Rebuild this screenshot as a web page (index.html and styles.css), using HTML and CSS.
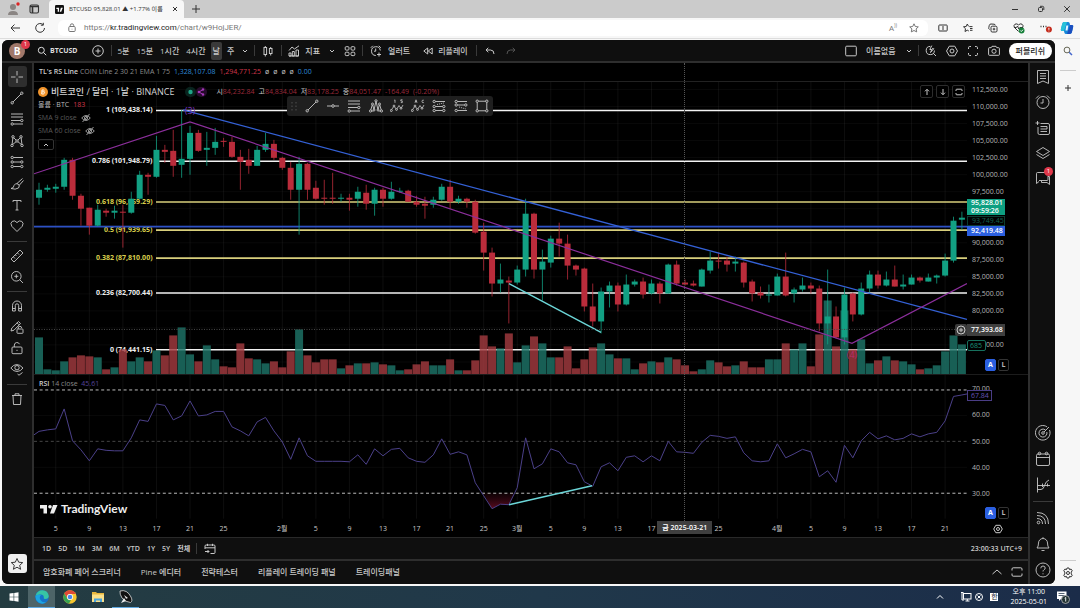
FILE: index.html
```html
<!DOCTYPE html>
<html lang="ko">
<head>
<meta charset="utf-8">
<title>BTCUSD 95,828.01 ▲ +1.77% 이름없음</title>
<link rel="stylesheet" href="styles.css">
</head>
<body>
<header class="tabs">
  <svg class="profile" viewBox="0 0 14 14"><circle cx="7" cy="5" r="3" fill="#8a8583"/><path d="M2 13q0-4 5-4t5 4z" fill="#8a8583"/><circle cx="12" cy="2" r="1.7" fill="#d22"/></svg>
  <svg class="workspaces" viewBox="0 0 12 12"><rect x="2" y="2" width="8.5" height="8" rx="1.5" fill="none" stroke="#333" stroke-width="1.1"/><path d="M2 3.500h8.500M4.500 4v6" stroke="#333" stroke-width="1.6"/></svg>
  <div class="tab">
    <svg class="favicon" viewBox="0 0 10 10"><rect width="10" height="10" rx="1.5" fill="#111"/><path d="M1.500 3h3v4.500h-1.500v-3h-1.500zM6.500 3h2.200l-1.800 4.500h-1.600z" fill="#fff"/></svg>
    <span class="tab-title">BTCUSD 95,828.01 ▲ +1.77% 이름</span>
    <button class="plain" aria-label="탭 닫기"><svg class="s8" viewBox="0 0 8 8"><path d="M2 2l4 4M6 2l-4 4"/></svg></button>
  </div>
  <button class="plain newtab" aria-label="새 탭"><svg class="s10" viewBox="0 0 10 10"><path d="M5 1v8M1 5h8"/></svg></button>
  <div class="window-buttons">
    <button class="plain" aria-label="최소화"><svg class="s10" viewBox="0 0 10 10"><path d="M2 5.500h6"/></svg></button>
    <button class="plain" aria-label="복원"><svg class="s10" viewBox="0 0 10 10"><rect x="2.500" y="3.500" width="4" height="4" rx="1"/><path d="M4 2.300h2.500q1.300 0 1.300 1.300V6"/></svg></button>
    <button class="plain" aria-label="닫기"><svg class="s10" viewBox="0 0 10 10"><path d="M2.200 2.200l5.600 5.600M7.800 2.200l-5.600 5.600"/></svg></button>
  </div>
</header>
<nav class="address">
  <button class="plain" aria-label="뒤로"><svg class="s12" viewBox="0 0 12 12"><path d="M11 6H2M5.500 2.500L2 6l3.500 3.500"/></svg></button>
  <button class="plain" aria-label="새로 고침"><svg class="s12" viewBox="0 0 12 12"><path d="M10.500 6a4.400 4.400 0 1 1-1.600-3.500M9.300 .8v2.400H6.900"/></svg></button>
  <div class="urlbox">
    <svg class="s10 dim" viewBox="0 0 10 10"><rect x="1.800" y="3.500" width="6.400" height="5" rx="1"/><path d="M3.300 3.500V2.500a1.700 1.700 0 0 1 3.400 0v1M5 5.800v.6"/></svg>
    <span class="url">https://<b>kr.tradingview.com</b>/chart/w9HojJER/</span>
    <button class="plain dim read" aria-label="소리내어 읽기">A<sup>))</sup></button>
    <button class="plain dim" aria-label="즐겨찾기 추가"><svg class="s10" viewBox="0 0 10 10"><path d="M5 .8l1.300 2.700 3 .4-2.200 2 .6 3L5 7.500 2.300 8.900l.6-3-2.200-2 3-.4z"/></svg></button>
  </div>
  <div class="browser-tools">
    <button class="plain" aria-label="분할 화면"><svg class="s10" viewBox="0 0 10 10"><path d="M4 2H1.500q-.7 0-.7.700v4.600q0 .7.700.7H4M6 2h2.500q.7 0 .7.700v4.600q0 .7-.7.700H6M5 1v8"/></svg></button>
    <button class="plain" aria-label="즐겨찾기"><svg class="s10" viewBox="0 0 10 10"><path d="M6.300 3.600h3.200M7 5.500h2.500M7 7.300h2.500M5.500 3.300L4.300 1 3.200 3.500l-2.700.3 2 1.900-.5 2.800 2.300-1.300 1.500.8"/></svg></button>
    <button class="plain" aria-label="컬렉션"><svg class="s10" viewBox="0 0 10 10"><path d="M1.500 6.500Q.5 6 .8 4.500l.5-2.200Q1.600 1 3 1l3 .2q1.200.1 1.300 1"/><rect x="3" y="3.200" width="6" height="5.800" rx="1.200"/><path d="M6 4.800v2.600M4.700 6.100h2.600"/></svg></button>
    <button class="plain" aria-label="브라우저 필수 요소"><svg class="s12" viewBox="0 0 12 12"><path d="M5.500 9.500L1.300 5.300Q.4 3.300 2 2.200q2-1 3.500.7 1.700-1.700 3.500-.7 1.700 1.300.8 3.200M1 5.500h2.500l1-1.500 1.300 3 1-1.500H10"/><circle cx="8.600" cy="8.500" r="2.900" fill="#16803a" stroke="none"/><path d="M7.300 8.500l1 1 1.700-1.800" stroke="#fff"/></svg></button>
    <button class="plain" aria-label="설정 및 기타"><svg class="s12" viewBox="0 0 12 12"><path d="M.5 4.500h1M3 4.500h1M5.500 4.500h1" stroke-width="1.500"/><circle cx="8.900" cy="7.500" r="3" fill="#c42b1c" stroke="none"/><path d="M8.900 5.800v2M8.900 8.700v.6" stroke="#fff"/></svg></button>
  </div>
  <svg class="copilot" viewBox="0 0 14 14"><path d="M4 1h4q1.300 0 1.700 1.300L10 4h2q1.600 0 1.200 1.800l-1.300 5.400Q11.400 13 9.800 13H6q-1.200 0-1.600-1.300L4 10H2Q.5 10 .9 8.300L2.200 3Q2.700 1 4 1z" fill="#1687d9"/><path d="M4 10H2Q.5 10 .9 8.300L2.200 3Q2.700 1 4 1h3z" fill="#27c2d8"/><path d="M10 4h2q1.600 0 1.200 1.800l-1.300 5.400Q11.400 13 9.800 13H7z" fill="#1b4fc0"/><path d="M6.300 4.500h2L7.500 9.500h-2z" fill="#e6f6ff"/></svg>
</nav>

<div class="content">
<main class="app">
  <div class="toolbar">
    <button class="avatar" aria-label="계정">B<span class="badge">1</span></button>
    <button class="symbol"><svg class="s10" viewBox="0 0 10 10"><circle cx="4.300" cy="4.300" r="3"/><path d="M6.600 6.600L9.200 9.200"/></svg>BTCUSD</button>
    <button class="plus" aria-label="비교"><svg class="s12" viewBox="0 0 12 12"><circle cx="6" cy="6" r="5.300"/><path d="M6 3.500v5M3.500 6h5"/></svg></button>
    <i class="vsep"></i>
    <div class="intervals">
      <button>5분</button><button>15분</button><button>1시간</button><button>4시간</button><button class="on">날</button><button>주</button>
      <button aria-label="더 보기"><svg class="s8" viewBox="0 0 8 8"><path d="M2 3l2 2 2-2"/></svg></button>
    </div>
    <i class="vsep"></i>
    <button class="gap-icon" aria-label="캔들"><svg class="s12" viewBox="0 0 12 12"><rect x="2" y="2.500" width="2.600" height="7"/><path d="M3.300 1v1.500M3.300 9.500v2M8.700 2v1.500M8.700 8.500v2"/><rect x="7.400" y="3.500" width="2.600" height="5"/></svg></button>
    <i class="vsep"></i>
    <button class="labelled"><svg class="s12" viewBox="0 0 12 12"><path d="M1 5.500l3-3.500 2.500 2L11 .8M1 11V8h2v3zM4.300 11V6.500h2V11zM8 11V5h2.500v6zM1 11h9.500"/></svg>지표</button>
    <button class="chev" aria-label="지표 목록"><svg class="s8" viewBox="0 0 8 8"><path d="M2 3l2 2 2-2"/></svg></button>
    <button class="grid-icon" aria-label="템플릿"><svg class="s12" viewBox="0 0 12 12"><rect x="1.200" y="1.700" width="3.800" height="3.400" rx="1"/><rect x="7" y="1.700" width="3.800" height="3.400" rx="1"/><rect x="1.200" y="7.200" width="3.800" height="3.400" rx="1"/><rect x="7" y="7.200" width="3.800" height="3.400" rx="1"/></svg></button>
    <i class="vsep"></i>
    <button class="labelled alert"><svg class="s12" viewBox="0 0 12 12"><path d="M10.300 5.500A4.400 4.400 0 1 0 5.800 10.500M5.700 3.500v2.700H4M.8 2.800l2-2M8.800 .8l2 2M9 7.500v4M7 9.500h4"/></svg>얼러트</button>
    <button class="labelled replay"><svg class="s10" viewBox="0 0 10 10"><path d="M4.700 2v6L.8 5zM9.200 2v6L5.300 5z"/></svg>리플레이</button>
    <i class="vsep"></i>
    <button class="undo" aria-label="실행 취소"><svg class="s10" viewBox="0 0 10 10"><path d="M3.300 1.800L1 4l2.300 2.200M1 4h4.500Q9 4 9 8"/></svg></button>
    <button class="redo" aria-label="다시 실행"><svg class="s10" viewBox="0 0 10 10"><path d="M6.700 1.800L9 4 6.700 6.200M9 4H4.500Q1 4 1 8"/></svg></button>
    <div class="toolbar-right">
      <button aria-label="레이아웃"><svg class="s12" viewBox="0 0 12 12"><rect x=".7" y="1.200" width="10.600" height="9.600" rx="1"/></svg></button>
      <button>이름없음</button>
      <button aria-label="레이아웃 목록"><svg class="s8" viewBox="0 0 8 8"><path d="M2 3l2 2 2-2"/></svg></button>
      <i class="vsep"></i>
      <button aria-label="빠른 검색"><svg class="s12" viewBox="0 0 12 12"><path d="M9.400 5.500A4.100 4.100 0 1 1 5.300 1.400M8.200 8.200l2.800 2.800M6.800.6L4.800 4.500h2L5.500 7.500 8.800 3.700H7"/></svg></button>
      <button aria-label="설정"><svg class="s12" viewBox="0 0 12 12"><path d="M3.300 1.200h5.400L11.500 6l-2.800 4.800H3.300L.5 6z"/><circle cx="6" cy="6" r="2"/></svg></button>
      <button aria-label="전체 화면"><svg class="s12" viewBox="0 0 12 12"><path d="M1.500 4V2.700q0-1.200 1.200-1.200H4M8 1.500h1.300q1.200 0 1.200 1.200V4M10.500 8v1.300q0 1.200-1.200 1.200H8M4 10.500H2.700q-1.200 0-1.200-1.200V8"/></svg></button>
      <button aria-label="스냅샷"><svg class="s12" viewBox="0 0 12 12"><path d="M.6 3.500q0-.8.800-.8h1.800l.8-1.400h4l.8 1.400h1.800q.8 0 .8.800v6q0 .8-.8.800H1.400q-.8 0-.8-.8z"/><circle cx="6" cy="6.200" r="2.100"/></svg></button>
      <button class="publish">퍼블리쉬</button>
    </div>
  </div>

  <div class="workspace">
    <aside class="drawbar">
      <div class="tools tools-8">
        <button class="on" aria-label="십자선"><svg class="s14" viewBox="0 0 14 14"><path d="M7 1v4.500M7 8.500V13M1 7h4.500M8.500 7H13"/></svg></button>
        <button aria-label="추세선"><svg class="s14" viewBox="0 0 14 14"><path d="M3 11L11 3"/><circle cx="2.200" cy="11.800" r="1.200"/><circle cx="11.800" cy="2.200" r="1.200"/></svg></button>
        <button aria-label="피보나치"><svg class="s14" viewBox="0 0 14 14"><path d="M1 2h12M1 5h12M1 8.500h9.500M3.500 12H13"/><circle cx="11.800" cy="8.500" r="1.200"/><circle cx="2.200" cy="12" r="1.200"/></svg></button>
        <button aria-label="패턴"><svg class="s14" viewBox="0 0 14 14"><path d="M2 11L3 3l4 4 4-4 1 8-5-4z"/><g fill="#0f0f0f"><circle cx="3" cy="2.800" r="1.200"/><circle cx="11" cy="2.800" r="1.200"/><circle cx="7" cy="7" r="1.200"/><circle cx="2" cy="11.500" r="1.200"/><circle cx="12" cy="11.500" r="1.200"/></g></svg></button>
        <button aria-label="예측"><svg class="s14" viewBox="0 0 14 14"><path d="M3.500 2.500H13M3.500 7h7M3.500 11.500h7"/><circle cx="2.200" cy="2.500" r="1.200"/><circle cx="2.200" cy="7" r="1.200"/><circle cx="11.800" cy="7" r="1.200"/><circle cx="2.200" cy="11.500" r="1.200"/><circle cx="11.800" cy="11.500" r="1.200"/></svg></button>
        <button aria-label="브러쉬"><svg class="s14" viewBox="0 0 14 14"><path d="M1 11.500q3-.5 3-3Q5.500 5.500 8 7t.5 4Q5.500 13 1 11.500zM7 6.500L12.500 1.500M9 8.500l4.500-5"/></svg></button>
        <button aria-label="텍스트"><svg class="s14" viewBox="0 0 14 14"><path d="M3 4V2.500h8V4M7 2.500v9.500M5.500 12h3"/></svg></button>
        <button aria-label="아이콘"><svg class="s14" viewBox="0 0 14 14"><path d="M7 12.500L1.800 7.300Q-.2 4 2.200 2.400 5 .8 7 3.600q2-2.800 4.800-1.200 2.400 1.600.4 4.900z"/></svg></button>
      </div>
      <i class="hsep"></i>
      <div class="tools tools-2">
        <button aria-label="측정"><svg class="s14" viewBox="0 0 14 14"><path d="M1 10L10 1l3 3-9 9zM3.500 8l1.500 1.500M5.500 6l1 1M7.500 4L9 5.500"/></svg></button>
        <button aria-label="확대"><svg class="s14" viewBox="0 0 14 14"><circle cx="6.300" cy="6.300" r="4.800"/><path d="M9.800 9.800L13 13M6.300 4.300v4M4.300 6.300h4"/></svg></button>
      </div>
      <i class="hsep"></i>
      <div class="tools tools-4">
        <button aria-label="자석"><svg class="s14" viewBox="0 0 14 14"><path d="M2.500 12V6.500a4.500 4.500 0 0 1 9 0V12H8.700V6.500a1.700 1.700 0 0 0-3.400 0V12zM2.500 9.500h2.800M8.700 9.500h2.800"/></svg></button>
        <button aria-label="그리기 모드 유지"><svg class="s14" viewBox="0 0 14 14"><path d="M1 11l.8-3L8.500 1.500l2 2L4 10.200zM7 2.800l2 2"/><rect x="7" y="9" width="6" height="4.300" rx=".6"/><path d="M8.200 9V8a1.700 1.700 0 0 1 3.400 0"/></svg></button>
        <button aria-label="그림 잠금"><svg class="s14" viewBox="0 0 14 14"><rect x="2" y="6" width="10" height="6.700" rx="1"/><path d="M4.300 6V4a2.700 2.700 0 0 1 5.200-.8M7 8.800v1.200"/></svg></button>
        <button aria-label="그림 숨기기"><svg class="s14" viewBox="0 0 14 14"><path d="M.8 6Q6.500-1 13 6q-2.500 3.500-6 3.500T.8 6z"/><circle cx="7" cy="5.700" r="2.200"/><path d="M7.500 12l1.500 1.200 3.500-2.700"/></svg></button>
      </div>
      <i class="hsep"></i>
      <div class="tools tools-1">
        <button aria-label="삭제"><svg class="s14" viewBox="0 0 14 14"><path d="M2 3.500h10M5 3.500V1.800h4v1.700M3 3.500l.5 9h7l.5-9"/></svg></button>
      </div>
      <button class="favorites" aria-label="즐겨찾기 도구"><svg class="s14" viewBox="0 0 14 14"><path d="M7 1.500l1.700 3.700 4 .4-3 2.700.9 4L7 10.200l-3.600 2.100.9-4-3-2.700 4-.4z"/></svg></button>
    </aside>

    <section class="center">
      <div class="chart">
        <div class="rs-line"><span><b>TL's RS Line</b> <span class="muted">COIN Line 2 30 21 EMA 1 75</span></span><span class="lightblue">1,328,107.08</span><span class="red">1,294,771.25</span><span>ø</span><span>ø</span><span>ø</span><span>ø</span><span class="lightblue">0.00</span></div>
        <div class="pane price-pane">
          <div class="plot" id="price-plot">
            <div class="fibs" id="fibs"></div>
            <svg class="graph" id="price-graph" viewBox="34 82 933 293" preserveAspectRatio="none"></svg>
            <div class="legend">
              <div class="title-row">
                <svg class="coin" viewBox="0 0 10 10"><circle cx="5" cy="5" r="5" fill="#f0932b"/><path d="M4 3h1.500q1 .3.500 1.600 1 .8.200 1.900-.3.500-1.200.5H3.700zM4 4.900h1.800" stroke="#fff" fill="none" stroke-width=".9"/></svg>
                <strong>비트코인 / 달러 · 1날 · BINANCE</strong>
                <span class="status"><svg viewBox="0 0 22 10"><rect width="11" height="10" rx="5" fill="#09241e"/><rect x="11" width="11" height="10" rx="5" fill="#260b2b"/><circle cx="5.500" cy="5" r="2.200" fill="#1fa587"/><path d="M18 2.500L14 5l4 2.500" stroke="#a437b8" fill="none"/><circle cx="14" cy="5" r="1.300" fill="#a437b8"/><circle cx="18" cy="2.500" r="1.200" fill="#a437b8"/><circle cx="18" cy="7.500" r="1.200" fill="#a437b8"/></svg></span>
                <span class="ohlc"><span>시<em>84,232.84</em></span><span>고<em>84,834.04</em></span><span>저<em>83,178.25</em></span><span>종<em>84,051.47</em></span><em>-164.49</em><em>(-0.20%)</em></span>
              </div>
              <div class="row volume"><span>볼륨 · BTC</span> <span class="red">183</span></div>
              <div class="row faint">SMA 9 close <svg class="s10" viewBox="0 0 10 10"><path d="M.7 5Q5 0 9.300 5 5 10 .7 5zM1.500 9l7-8"/><circle cx="5" cy="5" r="1.600"/></svg></div>
              <div class="row faint">SMA 60 close <svg class="s10" viewBox="0 0 10 10"><path d="M.7 5Q5 0 9.300 5 5 10 .7 5zM1.500 9l7-8"/><circle cx="5" cy="5" r="1.600"/></svg></div>
              <button class="collapse" aria-label="범례 접기"><svg class="s8" viewBox="0 0 8 8"><path d="M2 5l2-2 2 2"/></svg></button>
            </div>
            <div class="pane-buttons">
              <button aria-label="위로"><svg class="s8" viewBox="0 0 8 8"><path d="M4 7V1.500M2 3.300l2-2 2 2"/></svg></button>
              <button aria-label="아래로"><svg class="s8" viewBox="0 0 8 8"><path d="M4 1v5.500M2 4.700l2 2 2-2"/></svg></button>
              <button aria-label="최대화"><svg class="s8" viewBox="0 0 8 8"><path d="M1 3V2q0-.8.8-.8h4.400Q7 1.200 7 2v1M7 5v1q0 .8-.8.800H1.800Q1 6.800 1 6V5"/></svg></button>
            </div>
            <div class="favbar">
              <svg class="s14 grip" viewBox="0 0 14 14"><path d="M5 3v1.500M5 6.500V8M5 10v1.500M9 3v1.500M9 6.500V8M9 10v1.500"/></svg>
              <button aria-label="추세선"><svg class="s14" viewBox="0 0 14 14"><path d="M3 11L11 3"/><circle cx="2.200" cy="11.800" r="1.200"/><circle cx="11.800" cy="2.200" r="1.200"/></svg></button>
              <button aria-label="수평선"><svg class="s14" viewBox="0 0 14 14"><path d="M1 7h4.700M8.300 7H13"/><circle cx="7" cy="7" r="1.300"/></svg></button>
              <button aria-label="되돌림"><svg class="s14" viewBox="0 0 14 14"><path d="M1 2h12M1 5h12M1 8.500h9.500M3.500 12H13"/><circle cx="11.800" cy="8.500" r="1.200"/><circle cx="2.200" cy="12" r="1.200"/></svg></button>
              <button aria-label="헤드 앤 숄더"><svg class="s14" viewBox="0 0 14 14"><path d="M1.500 12L3.500 5 5 11l2-9 2 9 1.500-6 2 7M2 12h2.500M9.500 12h2.500"/><g fill="#1f1f1f"><circle cx="7" cy="1.800" r="1.100"/><circle cx="3.500" cy="5" r="1"/><circle cx="10.500" cy="5" r="1"/><circle cx="1.500" cy="12" r="1.100"/><circle cx="5" cy="11" r="1"/><circle cx="9" cy="11" r="1"/><circle cx="12.500" cy="12" r="1.100"/></g></svg></button>
              <button aria-label="엘리엇 임펄스"><svg class="s14" viewBox="0 0 14 14"><path d="M1 11.500l3-4.500 2.500 3.500L9 6.500l2 3L13 6M4.300 1.300L5 .8v3M12.500.8h-1.700v1.200h1.500v1.600h-1.500" stroke-width=".8"/><g fill="#1f1f1f"><circle cx="1.300" cy="11.500" r="1"/><circle cx="4" cy="7" r=".9"/><circle cx="6.500" cy="10.500" r=".9"/><circle cx="11" cy="9.300" r=".9"/></g></svg></button>
              <button aria-label="엘리엇 조정"><svg class="s14" viewBox="0 0 14 14"><path d="M1 11.500l3-4.500 2.500 3.500L9 6.500l2 3L13 6M4 3.700L5 .8l1 2.900M4.300 2.800h1.400M12.800 1.200q-1.800-.5-1.800 1.200t1.800 1.200" stroke-width=".8"/><g fill="#1f1f1f"><circle cx="1.300" cy="11.500" r="1"/><circle cx="4" cy="7" r=".9"/><circle cx="6.500" cy="10.500" r=".9"/><circle cx="11" cy="9.300" r=".9"/></g></svg></button>
              <button aria-label="매수 포지션"><svg class="s14" viewBox="0 0 14 14"><path d="M3.500 2.500H13M3.500 7.500h7M3.500 11.500h7"/><path d="M5 5.500l7-1.500" stroke-dasharray="1 1"/><circle cx="2.200" cy="2.500" r="1.200"/><circle cx="2.200" cy="7.500" r="1.200"/><circle cx="11.800" cy="7.500" r="1.200"/><circle cx="2.200" cy="11.500" r="1.200"/><circle cx="11.800" cy="11.500" r="1.200"/></svg></button>
              <button aria-label="매도 포지션"><svg class="s14" viewBox="0 0 14 14"><path d="M3.500 2.500H13M3.500 6h7M3.500 11.500H13"/><path d="M5 8l7 2" stroke-dasharray="1 1"/><circle cx="2.200" cy="2.500" r="1.200"/><circle cx="2.200" cy="6" r="1.200"/><circle cx="11.800" cy="6" r="1.200"/><circle cx="2.200" cy="11.500" r="1.200"/></svg></button>
              <button aria-label="직사각형"><svg class="s14" viewBox="0 0 14 14"><rect x="2.200" y="2.200" width="9.600" height="9.600"/><g fill="#1f1f1f"><circle cx="2.200" cy="2.200" r="1.200"/><circle cx="11.800" cy="2.200" r="1.200"/><circle cx="2.200" cy="11.800" r="1.200"/><circle cx="11.800" cy="11.800" r="1.200"/></g></svg></button>
            </div>
            <button class="axis-plus" aria-label="가격에 추가"><svg class="s10" viewBox="0 0 10 10"><circle cx="5" cy="5" r="4"/><path d="M5 3v4M3 5h4"/></svg></button>
          </div>
          <div class="axis price-axis">
            <span>112,500.00</span><span>110,000.00</span><span>107,500.00</span><span>105,000.00</span><span>102,500.00</span><span>100,000.00</span><span>97,500.00</span><span>&nbsp;</span><span>&nbsp;</span><span>90,000.00</span><span>87,500.00</span><span>85,000.00</span><span>82,500.00</span><span>80,000.00</span><span>&nbsp;</span><span class="behind">00.00</span>
            <div class="tag last">95,828.01<br>09:59:26</div>
            <div class="tag prev">93,749.45</div>
            <div class="tag line">92,419.48</div>
            <div class="tag cursor">77,393.68</div>
            <div class="tag vol">685</div>
            <div class="scale-buttons"><button class="auto">A</button><button>L</button></div>
          </div>
        </div>
        <div class="pane rsi-pane">
          <div class="plot">
            <svg class="graph" id="rsi-graph" viewBox="34 375 933 144" preserveAspectRatio="none"></svg>
            <div class="rsi-legend"><b>RSI</b> 14 close &nbsp;<span class="violet">45.61</span></div>
            <div class="brand"><svg viewBox="0 0 18 10"><path d="M0 1h7v8.500H3.500V4.500H0zM13 1h4.500L14 9.500h-4z" fill="#eee"/><circle cx="10" cy="2.800" r="1.800" fill="#eee"/></svg>TradingView</div>
          </div>
          <div class="axis rsi-axis">
            <span>70.00</span><span>60.00</span><span>50.00</span><span>40.00</span><span>30.00</span>
            <div class="tag rsi">67.84</div>
            <div class="scale-buttons"><button class="auto">A</button><button>L</button></div>
          </div>
        </div>
        <div class="time-axis">
          <div class="dates" id="dates"></div>
          <button class="axis-settings" aria-label="축 설정"><svg class="s10" viewBox="0 0 10 10"><path d="M2.800 1.300h4.400L9.300 5 7.200 8.700H2.800L.7 5z"/><circle cx="5" cy="5" r="1.500"/></svg></button>
        </div>
        <div class="cross"><div class="cross-span"><i class="cross-line"></i><span class="cross-date">금 2025-03-21</span></div></div>
      </div>
      <div class="ranges">
        <button>1D</button><button>5D</button><button>1M</button><button>3M</button><button>6M</button><button>YTD</button><button>1Y</button><button>5Y</button><button>전체</button>
        <i class="vsep"></i>
        <button aria-label="날짜로 이동"><svg class="s12" viewBox="0 0 12 12"><path d="M1 6V3q0-1 1-1h8q1 0 1 1v6.500q0 1-1 1H6.500M1 4.800h10M3.500 .8V3M8.500 .8V3M1 8.500h4M3.500 7L5 8.500 3.500 10"/></svg></button>
        <time>23:00:33 UTC+9</time>
      </div>
      <div class="panels">
        <button>암호화폐 페어 스크리너</button><button>Pine 에디터</button><button>전략테스터</button><button>리플레이 트레이딩 패널</button><button>트레이딩패널</button>
        <span class="panel-tools">
          <button aria-label="패널 열기"><svg class="s12" viewBox="0 0 12 12"><path d="M1.500 8L6 4l4.500 4"/></svg></button>
          <button aria-label="패널 최대화"><svg class="s12" viewBox="0 0 12 12"><path d="M1 4.500V3q0-1.200 1.200-1.200h7.600Q11 1.800 11 3v1.500M11 7.500V9q0 1.200-1.200 1.200H2.200Q1 10.200 1 9V7.500"/></svg></button>
        </span>
      </div>
    </section>

    <aside class="widgets">
      <div class="tools tools-5">
        <button aria-label="왓치리스트"><svg class="s16" viewBox="0 0 16 16"><path d="M2.500 1.500h11v13L8 12l-5.500 2.500zM5 4.500h6M5 7h6M5 9.500h6"/></svg></button>
        <button aria-label="얼러트"><svg class="s16" viewBox="0 0 16 16"><circle cx="8" cy="8.500" r="6"/><path d="M8 5v4H5.500M1 4.500L4 1.500M12 1.500l3 3"/></svg></button>
        <button aria-label="뉴스"><svg class="s16" viewBox="0 0 16 16"><path d="M5.500 3.500H13q1.500 0 1.500 1.500v8q0 1.500-1.500 1.500H4.500Q3 14.500 3 13V7M5.500 6.500h6.500V9H5.500M5.500 11.500H12M.5 3h4M2.500 1v4"/></svg></button>
        <button aria-label="오브젝트 트리"><svg class="s16" viewBox="0 0 16 16"><path d="M8 2.500l6.500 4L8 10.500l-6.500-4zM1.500 9.500L8 13.500l6.500-4"/></svg></button>
        <button aria-label="채팅"><svg class="s16" viewBox="0 0 16 16"><path d="M4 11.500L1.500 13.500V3.500q0-1 1-1h9M13 6.500h1.500v8L12 12.500H6.500v-2M4 10.500h8q1 0 1-1V6"/></svg><span class="badge">1</span></button>
      </div>
      <div class="tools tools-low">
        <button aria-label="스크리너"><svg class="s16" viewBox="0 0 16 16"><path d="M12.200 2A7.300 7.300 0 1 0 14.500 5M10.500 5a4 4 0 1 0 1.300 2"/><circle cx="8" cy="8" r="1.300"/><path d="M9 7l5-5"/></svg></button>
        <button aria-label="캘린더"><svg class="s16" viewBox="0 0 16 16"><rect x="1.500" y="3" width="13" height="11.500" rx="1.500"/><path d="M1.500 6.500h13"/><circle cx="4.500" cy="2.500" r="1.300"/><circle cx="11.500" cy="2.500" r="1.300"/></svg></button>
        <button aria-label="옵션"><svg class="s16" viewBox="0 0 16 16"><path d="M2.500 .5v15M2.500 12.500H6Q8.500 12.500 9.500 8.500T14 3M2.500 8.500H15M7.500 6.500v3.500M12.500 6.500v3"/></svg></button>
        <i class="hsep"></i>
        <button aria-label="피드"><svg class="s16" viewBox="0 0 16 16"><circle cx="3.500" cy="12.500" r="1.300"/><path d="M2 8.500q5.500 0 5.500 5.500M2 5.500q8.500 0 8.500 8.500M2 2.500q11.500 0 11.500 11.500"/></svg></button>
        <button aria-label="알림"><svg class="s16" viewBox="0 0 16 16"><path d="M2 12q1.500-1.500 1.500-5a4.500 4.500 0 0 1 9 0q0 3.500 1.500 5zM6.500 14.500h3M8 1.200v1"/></svg></button>
        <button aria-label="도움말"><svg class="s16" viewBox="0 0 16 16"><circle cx="8" cy="8" r="7"/><path d="M5.800 6.300q0-2.300 2.200-2.300t2.200 2Q10.200 7.300 8.800 8 8 8.500 8 9.500M8 11.300v1"/></svg></button>
      </div>
    </aside>
  </div>
</main>
<aside class="edgebar">
  <button class="plain" aria-label="검색"><svg class="s10" viewBox="0 0 10 10"><circle cx="4" cy="4" r="2.900" stroke="#665"/><path d="M6.200 6.200L9 9" stroke="#46c" stroke-width="1.500"/></svg></button>
  <i></i>
  <button class="plain" aria-label="추가"><svg class="s10" viewBox="0 0 10 10"><path d="M5 2v6M2 5h6"/></svg></button>
  <i class="push"></i>
  <button class="plain" aria-label="사이드바 설정"><svg class="s12" viewBox="0 0 12 12"><path d="M5 1h2l.5 1.600 1.600-.5 1.200 1.700L9.200 5v2l1.100 1.200-1.200 1.700-1.600-.5L7 11H5l-.5-1.600-1.600.5-1.200-1.700L2.800 7V5L1.700 3.800l1.200-1.700 1.600.5z"/><circle cx="6" cy="6" r="1.500"/></svg></button>
</aside>
</div>

<footer class="taskbar">
  <button class="task" aria-label="시작"><svg class="s10" viewBox="0 0 10 10"><path d="M.5 1.500L4.600 1v3.700H.5zM5.200.9L9.500.3v4.400H5.200zM.5 5.300h4.100V9L.5 8.500zM5.200 5.300h4.300v4.400L5.200 9.100z" fill="#fff" stroke="none"/></svg></button>
  <button class="task active" aria-label="Edge"><svg class="s14" viewBox="0 0 14 14"><g stroke="none"><circle cx="7" cy="7" r="6.800" fill="#1673c9"/><path d="M.5 6Q2 .2 7.500.2 13 .5 13.800 6q-.2 3-3.500 3-2 0-1.500-1.500Q9 4.500 5.500 4.500 2 4.500.5 6z" fill="#38c4a4"/><path d="M.5 6Q3 3.500 6 5 3.800 7 5.500 10t6 2q-4 3-8 .5Q.2 10 .5 6z" fill="#1ca5e2"/></g></svg></button>
  <button class="task" aria-label="Chrome"><svg class="s14" viewBox="0 0 14 14"><g stroke="none"><circle cx="7" cy="7" r="6.700" fill="#f7c52e"/><path d="M7 .3A6.700 6.700 0 0 1 12.900 4H7a3 3 0 0 0-2.700 4.300L1.300 3.500A6.700 6.700 0 0 1 7 .3z" fill="#df4937"/><path d="M1.300 3.500l3 5A3 3 0 0 0 8 9.900l-2 3.700A6.700 6.700 0 0 1 1.300 3.500z" fill="#37a352"/><circle cx="7" cy="7" r="3" fill="#fff"/><circle cx="7" cy="7" r="2.300" fill="#4a87ea"/></g></svg></button>
  <button class="task" aria-label="파일 탐색기"><svg class="s14" viewBox="0 0 14 14"><g stroke="none"><path d="M1 2h4l1 1h7v9H1z" fill="#e8b73e"/><path d="M1 4.500h12V12H1z" fill="#fae08a"/><path d="M3 8.500h8V12H9v-1.500H5V12H3z" fill="#4ba3dc"/></g></svg></button>
  <button class="task running" aria-label="위성 안테나"><svg class="s14" viewBox="0 0 14 14"><path d="M1 1q7-2 11 6 2 4-.5 5.500Q6 12 3 8 .5 4 1 1z" fill="#111" stroke="#ddd" stroke-width=".8"/><path d="M2 13l3-5 2 3zM5 5l4 3-2 .8z" fill="#eee" stroke="none"/></svg></button>
  <div class="tray">
    <svg class="s10" viewBox="0 0 10 10"><path d="M2 6.500l3-3 3 3"/></svg>
    <svg class="s12 monitor" viewBox="0 0 12 12"><rect x="3.500" y="2.500" width="7.500" height="5.500"/><path d="M5.500 10h4M7.300 8v2M1 1.500h2.500M2 1.500V9h2"/></svg>
    <svg class="s10" viewBox="0 0 10 10"><circle cx="5" cy="5" r="3.500"/><path d="M3.500 3.500l3 3M6.500 3.500l-3 3"/></svg>
    <span class="ime">한</span>
    <span class="clock">오후 11:00<br>2025-05-01</span>
    <svg class="s14" viewBox="0 0 14 14"><path d="M1 1.500h9.500v7.500H5L3 11V9H1z" fill="#fff" stroke="none"/><path d="M2.500 3.500h6M2.500 5.500h6" stroke="#456"/><circle cx="9.500" cy="9.500" r="4" fill="#233" stroke="#bbb" stroke-width=".8"/><path d="M8.700 8.200l1-.7v4" stroke="#fff"/></svg>
  </div>
</footer>
<script src="chart.js"></script>
</body>
</html>
```

FILE: styles.css
```css
* { box-sizing: border-box; }
body {
  margin: 0; height: 100vh; min-height: 560px; display: flex; flex-direction: column; overflow: hidden;
  background: #f7f7f7; color: #c9c9c9;
  font: 7px/10px "Open Sans", "Noto Sans CJK KR", sans-serif;
}
button { font: inherit; color: inherit; background: none; border: 0; padding: 0; margin: 0; display: inline-flex; align-items: center; justify-content: center; white-space: nowrap; position: relative; }
svg { flex: none; display: block; fill: none; stroke: currentColor; stroke-width: 1; }
.s8 { width: 8px; height: 8px; }
.s10 { width: 10px; height: 10px; }
.s12 { width: 12px; height: 12px; }
.s14 { width: 14px; height: 14px; stroke-width: .9; }
.s16 { width: 16px; height: 16px; stroke-width: .9; }
.plain { color: #333; }
.dim { color: #777; }
.red { color: #d0364a; }
.lightblue { color: #2f8ad8; }
.violet { color: #54439a; }
.muted { color: #8c8c8c; }

/* browser chrome */
.tabs { flex: none; height: 18px; background: #cbcbcb; display: flex; align-items: center; color: #333; }
.profile { width: 14px; height: 14px; margin-left: 6px; stroke: none; }
.workspaces { width: 12px; height: 12px; margin: 0 9px 0 8px; }
.tab { width: 135px; height: 18px; padding: 0 5px 0 6px; display: flex; align-items: center; gap: 5px; background: #f7f7f7; border-radius: 4px 4px 0 0; }
.favicon { width: 9px; height: 9px; stroke: none; }
.tab-title { flex: 1; white-space: nowrap; font-size: 6px; }
.newtab { margin-left: 7px; }
.window-buttons { margin-left: auto; display: flex; gap: 16px; padding-right: 8px; }
.address { flex: none; height: 21px; display: flex; align-items: center; border-bottom: 1px solid #ddd; padding: 0 6px 0 9px; gap: 13px; }
.urlbox { flex: 1; height: 16px; margin-left: -1px; padding: 0 9px; display: flex; align-items: center; gap: 8px; background: #fff; border-radius: 6px; }
.url { flex: 1; margin-left: -1px; font-family: Roboto, sans-serif; font-size: 8px; color: #777; }
.url b { font-weight: 400; color: #222; }
.read { font-size: 8px; margin-right: 4px; }
.read sup { font-size: 5px; line-height: 5px; align-self: flex-start; }
.browser-tools { display: flex; align-items: center; gap: 15px; margin-left: -3px; }
.copilot { width: 14px; height: 14px; stroke: none; margin-left: -5px; }
.content { flex: 1; min-height: 0; display: flex; padding: 1px 0 2px 2px; background: #f7f7f7; }
.edgebar { width: 25px; flex: none; display: flex; flex-direction: column; align-items: center; padding: 6px 0 5px; }
.edgebar i { width: 16px; height: 1px; background: #ccc; margin: 14px 0 12px; }
.edgebar i.push { margin: auto 0 6px; }

/* application */
.app { flex: 1; min-width: 0; display: flex; flex-direction: column; background: #2e2e2e; border-radius: 6px; overflow: hidden; }
.toolbar { flex: none; height: 21px; margin-bottom: 2px; background: #0f0f0f; display: flex; align-items: center; font-size: 8px; font-weight: 500; padding: 0 3px 0 7px; }
.vsep { width: 1px; height: 11px; background: #3a3a3a; flex: none; }
.badge { position: absolute; width: 9px; height: 9px; border-radius: 50%; background: #e0384a; color: #fff; font: 6px/9px "Open Sans", sans-serif; text-align: center; right: -5px; top: -3px; }
.avatar { width: 16px; height: 16px; border-radius: 50%; background: #a1786a; color: #fff; font-size: 10px; font-weight: 700; }
.symbol { margin-left: 12px; gap: 3px; font-size: 7px; font-weight: 700; color: #ddd; }
.plus { margin: 0 7px 0 14px; }
.intervals { display: flex; align-items: center; gap: 7px; margin: 0 5px 0 6px; }
.intervals .on { background: #3a3a3a; border-radius: 2px; padding: 0 2px; margin: 0 -2px; height: 18px; }
.gap-icon { margin: 0 7px; }
.labelled { gap: 5px; margin-left: 6px; }
.chev { margin-left: 8px; }
.grid-icon { margin: 0 6px 0 8px; }
.alert { margin-left: 7px; gap: 6px; }
.replay { margin: 0 8px 0 13px; }
.undo { margin-left: 8px; }
.redo { margin-left: 11px; color: #555; }
.toolbar-right { margin-left: auto; display: flex; align-items: center; gap: 9px; }
.toolbar-right .vsep { margin: 0 -3px 0 -4px; }
.publish { height: 16px; padding: 0 7px; border-radius: 8px; background: #fff; color: #222; }
.workspace { flex: 1; min-height: 0; display: flex; gap: 2px; }
.drawbar { width: 30px; flex: none; background: #0f0f0f; display: flex; flex-direction: column; align-items: center; padding: 3px 0 11px; }
.tools { display: flex; flex-direction: column; width: 19px; flex: none; }
.tools button { flex: 1; }
.tools .on { background: #2e2e2e; border-radius: 3px; }
.tools-8 { height: 171px; }
.tools-4 { height: 85px; }
.tools-2 { height: 42px; }
.tools-1 { height: 21px; }
.hsep { width: 20px; height: 1px; background: #3a3a3a; margin: 4px 0 3px; flex: none; }
.favorites { margin-top: auto; width: 19px; height: 19px; background: #f0f0f0; color: #222; border-radius: 3px; }
.widgets { width: 25px; flex: none; background: #0f0f0f; display: flex; flex-direction: column; align-items: center; justify-content: space-between; padding: 1px 0; }
.tools-5 { height: 127px; }
.tools-5 .badge { right: -1px; top: 1px; }
.tools-low { height: 163px; }

/* chart */
.center { flex: 1; min-width: 0; display: flex; flex-direction: column; gap: 2px; }
.chart { flex: 1; min-height: 0; display: flex; flex-direction: column; background: #000; position: relative; margin-bottom: -2px; }
.rs-line { height: 19px; flex: none; border-bottom: 1px solid #222; padding: 4px 5px; display: flex; gap: 4px; white-space: nowrap; }
.pane { display: flex; min-height: 0; }
.price-pane { flex: 293 1 0; }
.rsi-pane { flex: 144 1 0; border-top: 1px solid #1c1c1c; }
.plot { flex: 1; min-width: 0; position: relative; }
.graph { position: absolute; inset: 0; width: 100%; height: 100%; stroke: none; }
.axis { width: 61px; flex: none; position: relative; display: flex; flex-direction: column; justify-content: space-between; padding-left: 5px; color: #b5b5b5; }
.price-axis { padding-top: 3px; padding-bottom: 24px; }
.behind { padding-left: 14px; }
.rsi-axis { padding-top: 9px; padding-bottom: 20px; overflow: hidden; }
.fibs span { position: absolute; right: 87.300%; margin-top: -5px; font-weight: 700; white-space: nowrap; color: #eee; }
.fibs .gold { color: #d9cf4c; }
.legend { position: absolute; left: 4px; top: 3px; }
.title-row { display: flex; align-items: center; height: 13px; white-space: nowrap; }
.title-row strong { font-size: 9px; font-weight: 500; color: #d5d5d5; margin: 0 11px 0 3px; }
.coin { width: 10px; height: 10px; stroke: none; }
.status svg { width: 22px; height: 10px; stroke: none; }
.ohlc { margin-left: 9px; display: flex; gap: 4px; }
.ohlc em { font-style: normal; color: #9c2a3b; }
.row { display: flex; align-items: center; gap: 4px; height: 13px; color: #bbb; }
.faint { color: #5a5a5a; }
.faint svg { color: #999; }
.collapse { width: 16px; height: 11px; border: 1px solid #333; border-radius: 2px; margin-top: 2px; }
.pane-buttons { position: absolute; right: 2px; top: 3px; display: flex; gap: 3px; }
.pane-buttons button { width: 13px; height: 13px; border: 1px solid #2c2c2c; border-radius: 2px; background: #000; }
.favbar { position: absolute; left: 27.100%; top: 14px; width: 206px; height: 20px; padding-right: 1px; background: #1f1f1f; border-radius: 3px; display: flex; align-items: center; justify-content: space-between; }
.favbar button { width: 20px; }
.favbar .grip { color: #555; }
.axis-plus { position: absolute; right: 0; top: 242px; width: 12px; height: 12px; background: #3a3a3a; border-radius: 2px; }
.tag { position: absolute; left: 0; width: 38px; padding: 0 4px; line-height: 9px; color: #fff; background: #000; font-weight: 600; }
.last { top: 117px; background: #0e9f81; line-height: 8px; }
.prev { top: 134px; border: 1px solid #0b3c32; color: #146050; font-weight: 400; line-height: 8px; }
.line { top: 144px; background: #2b5fe0; line-height: 10px; }
.cursor { top: 242px; background: #3f3f3f; line-height: 12px; }
.vol { top: 258px; width: 19px; padding: 0 2px; border: 1px solid #17705d; color: #1b9078; border-radius: 2px; font-weight: 400; }
.rsi { top: 15px; width: 25px; padding: 0 3px; border: 1px solid #4a3d85; color: #6552b5; font-weight: 400; }
.scale-buttons { position: absolute; left: 18px; bottom: 3px; display: flex; gap: 2px; font-weight: 700; }
.scale-buttons button { width: 11px; height: 12px; border: 1px solid #333; border-radius: 2px; background: #000; }
.rsi-pane .scale-buttons { bottom: 0; }
.scale-buttons .auto { background: #2b5fe0; border-color: #2b5fe0; color: #fff; }
.rsi-legend { position: absolute; left: 5px; top: 4px; color: #888; }
.rsi-legend b, .rs-line b { color: #ccc; font-weight: 600; }
.brand { position: absolute; left: 6px; bottom: 2px; display: flex; align-items: center; gap: 3px; color: #eee; font: 700 12px/16px Lato, sans-serif; }
.brand svg { width: 18px; height: 10px; stroke: none; }
.time-axis { flex: none; height: 18px; display: flex; }
.dates { flex: 1; position: relative; }
.dates span { position: absolute; top: 5px; transform: translateX(-50%); white-space: nowrap; }
.axis-settings { width: 61px; height: 20px; }
.cross { position: absolute; inset: 0 61px 0 0; pointer-events: none; }
.cross-span { height: 100%; width: 139.500%; display: flex; flex-direction: column; align-items: center; }
.cross-line { flex: 1; border-left: 1px dotted #555; }
.cross-date { height: 13px; margin-bottom: 3px; padding: 0 5px; line-height: 13px; background: #3f3f3f; color: #fff; font-weight: 600; }
.ranges, .panels { flex: none; background: #0f0f0f; display: flex; align-items: center; font-weight: 600; }
.ranges { height: 22px; border-top: 1px solid #292929; padding: 0 6px 0 8px; gap: 7px; }
.ranges .vsep { margin: 0 0 0 -1px; }
.ranges time { margin-left: auto; }
.panels { height: 23px; padding: 0 5px 2px 9px; gap: 20px; font-size: 8px; font-weight: 500; }
.panel-tools { margin-left: auto; display: flex; gap: 8px; }

/* taskbar */
.taskbar { flex: none; height: 22px; background: linear-gradient(90deg, #243c41, #20384a 50%, #1b2c49); display: flex; gap: 1px; color: #fff; }
.task { width: 27px; border-bottom: 1px solid transparent; }
.active { background: #4d6468; border-color: #5fa8e0; }
.running { border-color: #5fa8e0; }
.tray { margin-left: auto; display: flex; align-items: center; padding-right: 10px; }
.monitor { margin: 0 2px 0 15px; }
.ime { width: 8px; height: 8px; margin: 0 12px 0 6px; background: #fff; color: #123; line-height: 8px; text-align: center; }
.clock { text-align: center; margin-right: 9px; white-space: nowrap; }
```

FILE: chart.js
```js
// Daily candles from 3 January: colour, body top, body bottom, high, low, volume top, RSI.
const candles = `
g 190 198 183 205 338 431.5|g 188 190 185 192 370 430|g 187 189 184 193 371 429|g 160 187 158 190 362 409
r 160 196 158 200 358 441|r 196 209 194 226 356 450|r 208 226 208 235 357 461|g 210 226 205 227 358 449
r 211 213 209 217 370 450.5|g 211 213 206 219 368 451|r 212 213 205 248 350 451|g 199 213 192 214 362 438
g 175 199 171 200 358 420|r 175 177 173 195 362 421.5|g 150 177 136 178 351 404|r 150 152 145 163 356 405.5
r 151 166 130 177 336 420|g 159 165 110 178 328 416|g 133 159 126 175 355 401|r 133 151 130 152 362 416
g 148 150 132 166 346 415|g 142 148 128 155 360 411.5|r 141 142 138 147 367 411.5|r 142 157 137 158 368 427
r 157 162 150 190 344 431|r 160 166 149 174 359 436|g 150 166 146 166 360 422|g 144 150 133 152 364 417.5
r 144 158 140 160 362 431|r 158 168 157 170 368 442|r 168 190 162 200 352 459.5|g 164 190 157 235 330 438
r 164 190 163 200 356 456|r 188 199 181 200 363 461.5|r 198 199 180 205 360 461.5|r 198 199 173 204 360 461.5
g 198 199 194 202 369 461.5|r 198 200 194 211 366 462|g 192 199 187 207 364 455|r 193 204 185 210 364 464.5
g 190 204 188 216 363 449|r 190 199 188 207 365 456|g 192 199 182 200 366 449.5|g 191 192 188 193 371 448.5
r 191 202 190 202 370 458|r 202 205 196 207 365 461.5|r 204 206 197 219 362 462.5|g 200 205 197 208 366 455
g 187 200 184 201 366 439|r 187 202 180 209 360 454.5|g 199 202 196 204 371 452|r 199 202 198 208 371 455
r 202 233 200 234 361 483|r 232 253 223 271 336 496|r 253 284 248 297 347 509|g 280 284 264 293 349 504.5
r 281 283 277 324 334 505|g 270 283 266 285 363 488|g 214 270 199 277 346 438|r 214 270 213 279 337 469
g 262 270 250 301 344 464|g 239 263 236 268 358 449|r 239 244 223 257 358 452|r 244 266 235 280 347 463
r 266 270 265 276 369 465|r 269 307 268 312 360 482|r 307 322 284 327 348 486.5|g 292 322 288 334 344 467
g 286 292 282 308 355 463|r 286 305 283 312 359 471|g 285 305 275 306 359 457.5|g 282 285 280 287 370 456
r 282 295 278 299 364 462|g 284 294 280 295 362 456|r 284 294 282 304 363 461|g 265 294 264 294 358 441.5
r 265 284 261 286 360 452|r 283 285 280 286 366 452.5|r 284 286 281 287 372 453.5|g 270 287 269 287 370 442.5
g 261 271 252 274 361 435.5|r 261 262 253 269 363 436.5|r 261 265 257 272 367 438.5|g 262 264 257 272 366 437
r 263 283 262 288 362 453|r 282 294 280 302 368 461|r 293 296 287 299 368 462|g 295 296 285 303 360 461
g 277 296 274 296 360 444|r 277 296 253 297 344 458|g 290 294 288 303 350 454|g 286 290 278 292 344 449.5
r 286 289 283 294 367 452|r 289 324 286 332 335 477|g 317 324 270 345 301 471|r 317 338 307 339 347 482.5
g 295 338 288 345 311 445.5|r 294 315 293 322 350 458|g 289 315 283 316 340 441|g 275 289 271 293 364 432.5
r 275 286 271 289 361 439|g 280 286 272 287 357 436|r 280 287 266 287 361 440|g 285 287 275 290 362 438.5
g 278 285 275 285 365 434|r 278 281 277 283 370 437|g 278 282 274 282 369 434|g 276 278 275 284 366 432.5
g 261 276 254 277 352 421|g 221 261 217 263 336 396.5|g 218 220 212 230 345 395`
  .trim().split(/[|\n]/).map(row => row.split(" ").map((v, i) => (i ? +v : v)));

const LEFT = 34, WIDTH = 933, RIGHT = LEFT + WIDTH;
const GRID = "rgba(255,255,255,.06)";
const xAt = i => 39 + i * 8.39;
const line = (x1, y1, x2, y2, color, width = 1, extra = "") =>
  `<line x1="${x1}" y1="${y1}" x2="${x2}" y2="${y2}" stroke="${color}" stroke-width="${width}" ${extra}/>`;

// Day index and label of every tick on the time axis.
const ticks = [[2, "5"], [6, "9"], [10, "13"], [14, "17"], [18, "21"], [22, "25"], [29, "2월"], [33, "5"], [37, "9"],
  [41, "13"], [45, "17"], [49, "21"], [53, "25"], [57, "3월"], [61, "5"], [65, "9"], [69, "13"], [73, "17"],
  [81, "25"], [88, "4월"], [92, "5"], [96, "9"], [100, "13"], [104, "17"], [108, "21"]];

const levels = [[110.5, "1 (109,438.14)", 0], [161.5, "0.786 (101,948.79)", 0], [202.3, "0.618 (96,069.29)", 1],
  [230.5, "0.5 (91,939.65)", 1], [258.5, "0.382 (87,810.00)", 1], [293.5, "0.236 (82,700.44)", 0], [350.3, "0 (74,441.15)", 0]];

document.getElementById("dates").innerHTML = ticks
  .map(([i, t]) => `<span style="left:${((xAt(i) - LEFT) / WIDTH * 100).toFixed(2)}%">${t}</span>`).join("");
document.getElementById("fibs").innerHTML = levels
  .map(([y, t, gold]) => `<span class="${gold ? "gold" : ""}" style="top:${((y - 82) / 293 * 100).toFixed(2)}%">${t}</span>`).join("");

const gridV = (top, bottom) => ticks.map(([i]) => line(xAt(i), top, xAt(i), bottom, GRID)).join("");

let price = gridV(82, 375);
for (let k = 0; k < 17; k++) price += line(LEFT, 89.5 + k * 17.07, RIGHT, 89.5 + k * 17.07, "rgba(255,255,255,.04)");
levels.forEach(([y, , gold]) => { price += line(156, y, RIGHT, y, gold ? "#d8cf7c" : "#f2f2f2", gold ? 1.6 : 1.4); });
price += line(LEFT, 227, RIGHT, 227, "#2c50c4", 1.6);
candles.forEach(([c, , , , , vol], i) => {
  price += `<rect x="${xAt(i) - 4}" y="${vol}" width="8" height="${375 - vol}" fill="${c === "g" ? "#1d7468" : "#a23a3f"}" fill-opacity=".82"/>`;
});
candles.forEach(([c, top, bottom, high, low], i) => {
  const color = c === "g" ? "#12a083" : "#ba2c3b";
  price += line(xAt(i), high, xAt(i), low, color, 0.8);
  price += `<rect x="${xAt(i) - 3}" y="${top}" width="6" height="${bottom - top}" fill="${color}"/>`;
});
price += line(183, 110, RIGHT, 320, "#3461d6", 1.3);
price += `<polyline points="34,174 190,122 852,344 967,284" fill="none" stroke="#8c2f9c" stroke-width="1.200"/>`;
price += line(509, 284, 601, 333, "#6cd6d8", 1.4);
price += line(LEFT, 330, RIGHT, 330, "#4a4a4a", 1, 'stroke-dasharray="1 1.500"');
price += `<text x="190" y="114" font-size="9" text-anchor="middle" fill="#7c37c4">(3)</text>`;
price += `<text x="852" y="359" font-size="9" text-anchor="middle" fill="#b82c6c">(4)</text>`;
document.getElementById("price-graph").innerHTML = price;

let rsi = gridV(375, 519);
[415.5, 467.5].forEach(y => { rsi += line(LEFT, y, RIGHT, y, "rgba(255,255,255,.04)"); });
rsi += `<defs><linearGradient id="oversold" x1="0" y1="0" x2="0" y2="1"><stop offset="0" stop-color="#400816" stop-opacity=".2"/><stop offset="1" stop-color="#5c0c20"/></linearGradient></defs>`;
rsi += `<path d="M483 493L492 509L500 504.500L509 505L515 493z" fill="url(#oversold)"/>`;
rsi += line(LEFT, 390, RIGHT, 390, "#bdbdbd", 1, 'stroke-dasharray="3 2.600"');
rsi += line(LEFT, 441.5, RIGHT, 441.5, "#454545", 1, 'stroke-dasharray="3 2.600"');
rsi += line(LEFT, 493.5, RIGHT, 493.5, "#bdbdbd", 1, 'stroke-dasharray="3 2.600"');
const rsiPoints = candles.map((c, i) => `${xAt(i)},${c[6]}`).join(" ");
rsi += `<polyline points="34,435 ${rsiPoints} 967,394" fill="none" stroke="#4b408a" stroke-width="1"/>`;
rsi += line(509, 505, 592, 486, "#6cd6d8", 1.4);
document.getElementById("rsi-graph").innerHTML = rsi;
```
